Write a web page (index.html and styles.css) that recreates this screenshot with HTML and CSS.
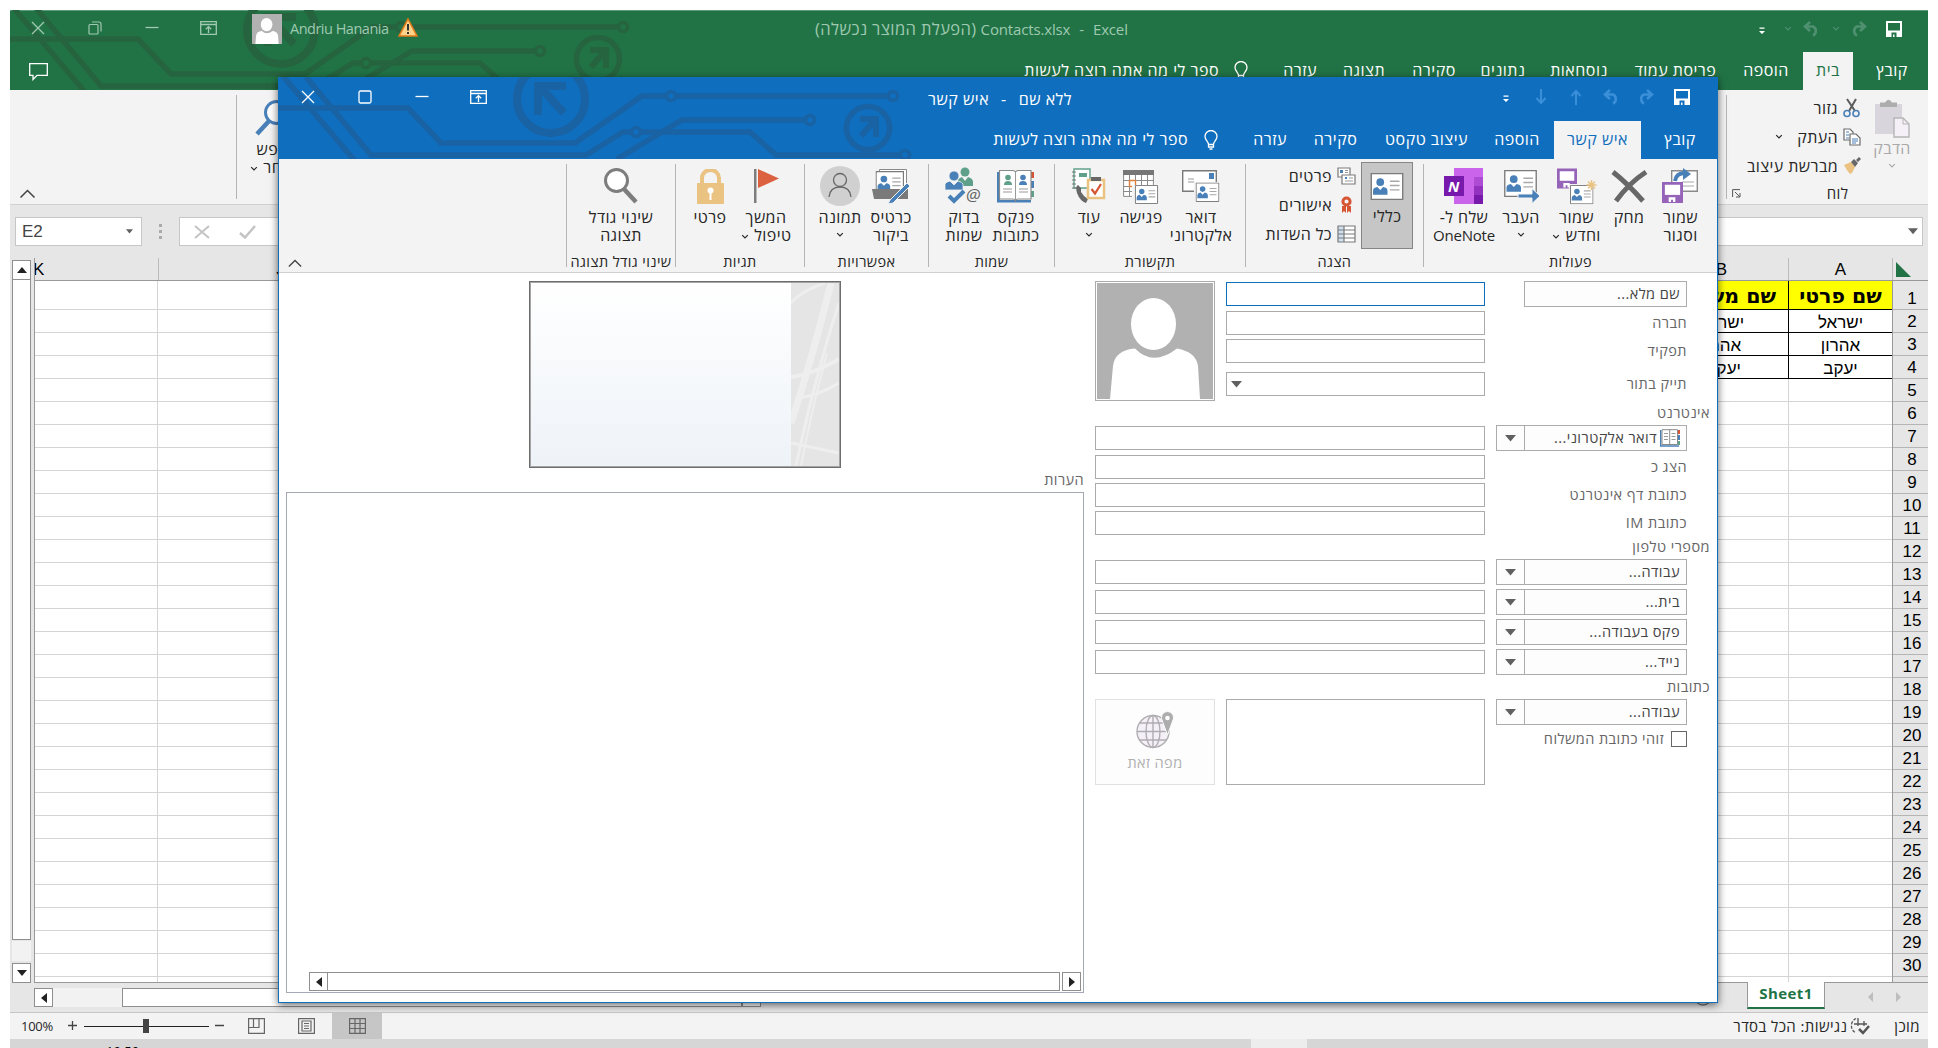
FILE: index.html
```html
<!DOCTYPE html>
<html lang="he">
<head>
<meta charset="utf-8">
<title>Contacts.xlsx - Excel</title>
<link rel="stylesheet" href="styles.css">
</head>
<body>
<svg class="defs" width="0" height="0">
  <symbol id="circuit" viewBox="0 0 640 82">
    <g fill="none" stroke="currentColor" stroke-width="5.5">
      <path d="M0 31H130L163 66H297L364 19H388M397 19H610"/>
      <path d="M4 -2L77 84"/>
      <path d="M28 0L93 78H308L345 55H353M362 55H472L498 78H623"/>
      <path d="M339 82L404 43H528"/>
      <g stroke-width="3.5"><circle cx="393" cy="19" r="4.5"/><circle cx="615" cy="19" r="4.5"/><circle cx="358" cy="55" r="4.5"/><circle cx="532" cy="43" r="4.5"/><circle cx="627" cy="78" r="4.5"/></g>
      <circle cx="273" cy="22" r="34" stroke-width="8"/>
      <circle cx="590" cy="51" r="21.5" stroke-width="5.5"/>
      <path d="M260 38V9H288M262 10L286 36" stroke-width="8"/>
      <path d="M582 42H598V60M597 43L583 59" stroke-width="6"/>
    </g>
  </symbol>
  <symbol id="chev" viewBox="0 0 8 6"><path d="M1.2 1.2L4 4L6.8 1.2" fill="none" stroke="currentColor" stroke-width="1.2"/></symbol>
  <symbol id="save" viewBox="0 0 16 16"><path d="M1 1H15V15H1Z" fill="none" stroke="currentColor" stroke-width="2"/><path d="M1 9.5H15V15H1Z" fill="currentColor"/><path d="M5.5 11.5H10.5V16H8.5V13.5H7V16H5.5Z" fill="var(--bar)"/></symbol>
  <symbol id="redo" viewBox="0 0 18 16"><path d="M11 1L16 5.500L11 10M15 5.500H8A5 5 0 0 0 8 14.500" fill="none" stroke="currentColor" stroke-width="2.600"/></symbol>
  <symbol id="undo" viewBox="0 0 18 16"><path d="M7 1L2 5.500L7 10M3 5.500H10A5 5 0 0 1 10 14.500" fill="none" stroke="currentColor" stroke-width="2.600"/></symbol>
  <symbol id="more" viewBox="0 0 6 8"><path d="M0.500 0.500H5.500V1.700H0.500ZM0 4H6L3 7Z" fill="currentColor"/></symbol>
  <symbol id="close" viewBox="0 0 14 14"><path d="M1 1L13 13M13 1L1 13" fill="none" stroke="currentColor" stroke-width="1.300"/></symbol>
  <symbol id="min" viewBox="0 0 14 14"><path d="M0.500 6.500H13.500" stroke="currentColor" stroke-width="1.300"/></symbol>
  <symbol id="ribbonopt" viewBox="0 0 17 14"><path d="M.7 .7H16.300V13.300H.7ZM.7 3.500H16.300M8.500 12V6M5.800 8.300L8.500 5.600L11.200 8.300" fill="none" stroke="currentColor" stroke-width="1.300"/></symbol>
  <symbol id="bulb" viewBox="0 0 14 20"><path d="M4.500 14.500C4.500 11.500 1 10 1 6.500A6 6 0 0 1 13 6.500C13 10 9.500 11.500 9.500 14.500ZM4.500 14V17H9.500V14M5.500 19H8.500" fill="none" stroke="currentColor" stroke-width="1.300"/></symbol>
  <symbol id="lens" viewBox="0 0 34 36"><circle cx="12.500" cy="12.500" r="11" fill="#fff" stroke="currentColor" stroke-width="3"/><path d="M20 21L32 34" stroke="currentColor" stroke-width="4.500"/></symbol>
  <symbol id="card" viewBox="0 0 34 28"><path d="M.7.7H33.300V27.300H.7Z" fill="#fff" stroke="#7a7a7a" stroke-width="1.400"/><circle cx="10" cy="9.500" r="4" fill="#4a80b8"/><path d="M2.500 22.500V18Q3 15 7 14.500L10 17.500L13 14.500Q17 15 17.500 18V22.500Z" fill="#4a80b8"/><path d="M20 8.500H30M20 13H30M20 17.500H30" stroke="#a8a8a8" stroke-width="1.500"/></symbol>
  <symbol id="floppy" viewBox="0 0 22 22"><path d="M1.500 1.500H20.500V20.500H1.500Z" fill="#fff" stroke="#9563b8" stroke-width="3"/><path d="M1.500 13.500H20.500V21H1.500Z" fill="#9563b8"/><path d="M7 16H14V21H11.500V18.500H9.500V21H7Z" fill="#fff"/></symbol>
  <symbol id="caret" viewBox="0 0 16 10"><path d="M1 8.500L8 1.500L15 8.500" fill="none" stroke="#444" stroke-width="1.500"/></symbol>
  <symbol id="down" viewBox="0 0 11 7"><path d="M0 0H11L5.500 6.500Z" fill="#606060"/></symbol>
  <symbol id="person" viewBox="0 0 116 116"><path fill="#b1b1b1" d="M0 0H116V116H0Z"/><ellipse cx="56.500" cy="41" rx="22.500" ry="26" fill="#fff"/><path d="M13 116L16 83Q18 67 38 65.500Q56 84 80 65.500Q99 69 101 83L103 116Z" fill="#fff"/></symbol>
</svg>

<main class="excel">
  <header class="xl-head">
    <svg class="pattern"><use href="#circuit"/></svg>
    <div class="titlebar">
      <div class="wincontrols">
        <svg width="14" height="14"><use href="#close"/></svg>
        <svg width="14" height="14" viewBox="0 0 14 14"><path d="M1 4.500Q1 3.500 2 3.500H9Q10 3.500 10 4.500V12Q10 13 9 13H2Q1 13 1 12ZM4 1H11Q13 1 13 3V10.500" fill="none" stroke="currentColor" stroke-width="1.200"/></svg>
        <svg width="14" height="14"><use href="#min"/></svg>
        <svg width="17" height="14"><use href="#ribbonopt"/></svg>
      </div>
      <svg class="avatar" preserveAspectRatio="none" viewBox="0 0 116 116"><use href="#person"/></svg>
      <span class="user">Andriu Hanania</span>
      <svg class="warn" viewBox="0 0 20 19"><path d="M10 1L19 18H1Z" fill="#fbd38a" stroke="#e07a1c" stroke-width="1.600"/><path d="M10 6V12.500M10 14V16" stroke="#333" stroke-width="2"/></svg>
      <div class="xl-title"><span class="he" dir="rtl">(הפעלת המוצר נכשלה)</span><span>Contacts.xlsx</span><span class="dash">-</span><span>Excel</span></div>
      <div class="qat xl-qat">
        <svg class="q-save" width="16" height="16"><use href="#save"/></svg>
        <svg class="q-redo dim" width="18" height="16"><use href="#redo"/></svg>
        <svg class="q-c1 dim" width="8" height="6"><use href="#chev"/></svg>
        <svg class="q-undo dim" width="18" height="16"><use href="#undo"/></svg>
        <svg class="q-c2 dim" width="8" height="6"><use href="#chev"/></svg>
        <svg class="q-more" width="6" height="8"><use href="#more"/></svg>
      </div>
    </div>
    <nav class="tabs xl-tabs">
      <span class="w72">קובץ</span><span class="w50 on">בית</span><span class="w74">הוספה</span><span class="w107">פריסת עמוד</span><span class="w86">נוסחאות</span><span class="w66">נתונים</span><span class="w72">סקירה</span><span class="w68">תצוגה</span><span class="w60">עזרה</span>
      <svg class="bulb" width="14" height="20"><use href="#bulb"/></svg><span class="tell">ספר לי מה אתה רוצה לעשות</span>
      <svg class="comment" width="19" height="18" viewBox="0 0 19 18"><path d="M.7.7H18.300V12.300H8L4 16.500V12.300H.7Z" fill="none" stroke="#fff" stroke-width="1.300"/></svg>
    </nav>
  </header>

  <section class="xl-ribbon">
    <div class="clip">
      <div class="paste"><svg width="36" height="39" viewBox="0 0 36 39"><path d="M1 5H28V35H1Z" fill="#d9d5dc"/><path d="M6 8V3.500H11Q14.500 -2 18 3.500H23V8Z" fill="#adadad"/><path d="M20 19H29L35 25V38H20Z" fill="#f5f0f7" stroke="#b5b5b5" stroke-width="1.400"/><path d="M29 19V25H35" fill="none" stroke="#b5b5b5"/></svg><span>הדבק</span><svg width="8" height="6"><use href="#chev"/></svg></div>
      <div class="cliplist">
        <div><svg width="18" height="20" viewBox="0 0 18 20"><path d="M4 1L12 13M13 1L6 13" stroke="#5c5c5c" stroke-width="2"/><g fill="none" stroke="#4a80b8" stroke-width="1.600"><circle cx="4" cy="15.500" r="3"/><circle cx="13" cy="15.500" r="3"/></g></svg><span>גזור</span></div>
        <div><svg width="18" height="18" viewBox="0 0 18 18"><g fill="#fff" stroke="#6c6c6c" stroke-width="1.200"><path d="M1 1H7L10 4V12H1Z"/><path d="M7 6H13L17 10V17H7Z"/></g><path d="M3 4H6M3 7H6M3 10H6M9 11H15M9 13H15M9 15H13" stroke="#4a80b8"/></svg><span>העתק</span><svg class="cc" width="8" height="6"><use href="#chev"/></svg></div>
        <div><svg width="18" height="18" viewBox="0 0 18 18"><path d="M1 8L8 5L12 10L9 16L7 17Q4 14 1 8Z" fill="#eac282"/><path d="M8 5L11 2L15 6L12 10ZM13 3L16 0L18 2L15 5Z" fill="#686868"/></svg><span>מברשת עיצוב</span></div>
      </div>
      <div class="cliplabel">לוח</div>
      <svg class="launch" width="9" height="9" viewBox="0 0 9 9"><path d="M.6 8V.6H8M3 3L7.500 7.500M8 4V8H4" fill="none" stroke="#555"/></svg>
    </div>
    <div class="find"><svg width="34" height="36" class="flip"><use href="#lens"/></svg><span>חפש</span><span>ובחר <svg width="8" height="6"><use href="#chev"/></svg></span></div>
    <svg class="xl-collapse" width="17" height="10"><use href="#caret"/></svg>
  </section>

  <section class="formula">
    <div class="namebox"><span>E2</span><svg width="7" height="5"><use href="#down"/></svg></div>
    <div class="dots"><i></i><i></i><i></i></div>
    <div class="fx"><svg width="16" height="14" viewBox="0 0 16 14"><path d="M1 1L15 13M15 1L1 13" stroke="#c4c4c4" stroke-width="2"/></svg><svg width="17" height="14" viewBox="0 0 17 14"><path d="M1 8L6 12.500L16 1" fill="none" stroke="#c4c4c4" stroke-width="2.500"/></svg><svg class="expand" width="10" height="7"><use href="#down"/></svg></div>
  </section>

  <section class="sheet">
    <div class="vscroll"><div class="sb"><svg width="10" height="6" viewBox="0 0 10 6"><path d="M0 6H10L5 0Z" fill="#222"/></svg></div><div class="vthumb"></div><div class="sb end"><svg width="10" height="6" viewBox="0 0 10 6"><path d="M0 0H10L5 6Z" fill="#222"/></svg></div></div>
    <div class="gridpane">
      <div class="colheads"><span class="corner"><svg width="15" height="15" viewBox="0 0 15 15"><path d="M0 0V15H15Z" fill="#217346"/></svg></span><span class="ca">A</span><span class="cb">B</span><span class="cmid"></span><span class="cj">J</span><span class="ck">K</span></div>
      <div class="gridbody">
        <div class="rownums"><b>1</b><b>2</b><b>3</b><b>4</b><b>5</b><b>6</b><b>7</b><b>8</b><b>9</b><b>10</b><b>11</b><b>12</b><b>13</b><b>14</b><b>15</b><b>16</b><b>17</b><b>18</b><b>19</b><b>20</b><b>21</b><b>22</b><b>23</b><b>24</b><b>25</b><b>26</b><b>27</b><b>28</b><b>29</b><b>30</b><b>31</b></div>
        <div class="cells">
          <div class="cell h">שם פרטי</div><div class="cell h">שם משפחה</div>
          <div class="cell">ישראל</div><div class="cell">ישראל</div>
          <div class="cell">אהרון</div><div class="cell">אהרון</div>
          <div class="cell">יעקב</div><div class="cell">יעקבי</div>
        </div>
      </div>
    </div>
  </section>

  <section class="sheetbar">
    <div class="sb"><svg width="6" height="10" viewBox="0 0 6 10"><path d="M6 0V10L0 5Z" fill="#222"/></svg></div>
    <div class="hgap"></div><div class="hthumb"></div><div class="sb last"></div>
    <svg class="plus" width="20" height="20" viewBox="0 0 20 20"><circle cx="10" cy="10" r="9" fill="none" stroke="#777" stroke-width="1.300"/></svg>
    <div class="tab1">Sheet1</div>
    <svg class="nav" width="34" height="10" viewBox="0 0 34 10"><path d="M5 0V10L0 5ZM28 0V10L33 5Z" fill="#bdbdbd"/></svg>
  </section>

  <footer class="status">
    <span class="pct">100%</span>
    <svg class="slider" width="160" height="26" viewBox="0 0 160 26"><path d="M0 12.500H9M4.500 8V17M147 12.500H156" stroke="#444" stroke-width="1.300"/><path d="M16 13.500H141" stroke="#222"/><path d="M75 6H81V20H75Z" fill="#444"/></svg>
    <svg class="view v1" width="17" height="16" viewBox="0 0 17 16"><path d="M.6.6H16.400V15.400H.6ZM.6 9.500H11V.6M5.500 .6V9.500" fill="none" stroke="#666" stroke-width="1.200"/></svg>
    <svg class="view v2" width="17" height="16" viewBox="0 0 17 16"><path d="M.6.6H16.400V15.400H.6ZM4 3H13V13H4ZM6 5.500H11M6 8H11M6 10.500H11" fill="none" stroke="#666" stroke-width="1.200"/></svg>
    <span class="viewon"><svg width="17" height="16" viewBox="0 0 17 16"><path d="M.6.6H16.400V15.400H.6ZM6 .6V15.400M11 .6V15.400M.6 5.500H16.400M.6 10.500H16.400" fill="none" stroke="#666" stroke-width="1.200"/></svg></span>
    <span class="access">נגישות: הכל בסדר</span>
    <svg class="acc" width="20" height="18" viewBox="0 0 20 18"><path d="M6 1.500A8 8 0 0 0 6 16" fill="none" stroke="#555" stroke-width="1.300" stroke-dasharray="3 1.500"/><path d="M8 1V9M4 7H12M14 4V9M11 7H17" stroke="#555" stroke-width="1.300"/><path d="M9 12L13 16L19 9" fill="none" stroke="#555" stroke-width="2.500"/></svg>
    <span class="ready">מוכן</span>
  </footer>
</main>
<div class="taskbar"><span class="clock">10:59</span><span class="running"></span></div>

<section class="outlook">
  <header class="ol-head">
    <svg class="pattern"><use href="#circuit"/></svg>
    <div class="titlebar">
      <div class="wincontrols">
        <svg width="14" height="14"><use href="#close"/></svg>
        <svg width="14" height="14" viewBox="0 0 14 14"><rect x="1" y="1" width="12" height="12" rx="1.500" fill="none" stroke="currentColor" stroke-width="1.300"/></svg>
        <svg width="14" height="14"><use href="#min"/></svg>
        <svg width="17" height="14"><use href="#ribbonopt"/></svg>
      </div>
      <div class="ol-title" dir="rtl">ללא שם<span>-</span>איש קשר</div>
      <div class="qat ol-qat">
        <svg class="q-save" width="16" height="16"><use href="#save"/></svg>
        <svg class="o-redo dim" width="18" height="16"><use href="#redo"/></svg>
        <svg class="o-undo dim" width="18" height="16"><use href="#undo"/></svg>
        <svg class="o-arr dim" width="12" height="16" viewBox="0 0 12 16"><path d="M6 16V2M1.500 7L6 2L10.500 7" fill="none" stroke="currentColor" stroke-width="2"/></svg>
        <svg class="o-arr dim" width="12" height="16" viewBox="0 0 12 16"><path d="M6 0V14M1.500 9L6 14L10.500 9" fill="none" stroke="currentColor" stroke-width="2"/></svg>
        <svg class="o-more" width="6" height="8"><use href="#more"/></svg>
      </div>
    </div>
    <nav class="tabs ol-tabs">
      <span class="w74">קובץ</span><span class="w87 on">איש קשר</span><span class="w74">הוספה</span><span class="w107">עיצוב טקסט</span><span class="w75">סקירה</span><span class="w56">עזרה</span>
      <svg class="bulb" width="14" height="20"><use href="#bulb"/></svg><span class="tell">ספר לי מה אתה רוצה לעשות</span>
    </nav>
  </header>

  <section class="ol-ribbon">
    <div class="group g-actions">
      <div class="btns">
        <div class="btn"><i><svg width="37" height="36" viewBox="0 0 37 36"><path d="M9.700 2.700H35.300V23.300H9.700Z" fill="#fff" stroke="#8a8a8a" stroke-width="1.400"/><path d="M20 14H32M20 18H32" stroke="#a8a8a8"/><path d="M13 13Q14 5 23 5" fill="none" stroke="#4a80b8" stroke-width="4"/><path d="M21 0L29 6L21 12Z" fill="#4a80b8"/><use href="#floppy" x="0" y="14" width="21" height="21"/></svg></i><span>שמור</span><span>וסגור</span></div>
        <div class="btn"><i><svg width="37" height="34" viewBox="0 0 37 34"><path d="M2 3Q16 14 32 32M35 3Q18 14 5 32" fill="none" stroke="#676767" stroke-width="5"/></svg></i><span>מחק</span></div>
        <div class="btn"><i><svg width="40" height="38" viewBox="0 0 40 38"><use href="#floppy" x="0" y="1" width="20" height="21"/><path d="M12 17H37V37H12Z" fill="#f3f3f3"/><use href="#card" x="13" y="18" width="23.500" height="19.300"/><path d="M34.500 13V23M29.500 18H39.500M31 14.500L38 21.500M38 14.500L31 21.500" stroke="#eac282" stroke-width="1.500"/></svg></i><span>שמור</span><span>וחדש <svg width="8" height="6"><use href="#chev"/></svg></span></div>
        <div class="btn"><i><svg width="38" height="36" viewBox="0 0 38 36"><use href="#card" x="1" y="2" width="35" height="27"/><path d="M16 26H30V20.500L38 28L30 35.500V30H16Z" fill="#4a80b8" stroke="#f3f3f3"/></svg></i><span>העבר</span><svg width="8" height="6"><use href="#chev"/></svg></div>
        <div class="btn"><i><svg width="40" height="38" viewBox="0 0 40 38"><path d="M10 1H39V37H10Z" fill="#ca64ea"/><path d="M30 10H39V19H30Z" fill="#ae4bd5"/><path d="M30 19H39V28H30Z" fill="#9332bf"/><path d="M30 28H39V37H30Z" fill="#7719aa"/><rect y="9" width="20" height="20" fill="#7719aa"/><text x="4" y="24.500" fill="#fff" font-family="Open Sans" font-weight="700" font-size="15">N</text></svg></i><span>שלח ל-</span><span class="latin">OneNote</span></div>
      </div><div class="glabel">פעולות</div>
    </div>
    <div class="group g-show">
      <div class="btns">
        <div class="btn sel"><i><svg width="34" height="27"><use href="#card"/></svg></i><span>כללי</span></div>
        <div class="showlist">
          <div><svg width="19" height="18" viewBox="0 0 19 18"><g fill="#fff" stroke="#7a7a7a" stroke-width="1.200"><path d="M1 1H13V10H1Z"/><path d="M5 8H18V17H5Z"/></g><path d="M3 3H6V6H3ZM8 10H10V12H8Z" fill="#4a80b8"/><path d="M8 3.500H11M8 5.500H11M12 11H16M8 14H16" stroke="#999"/></svg><span>פרטים</span></div>
          <div><svg width="19" height="18" viewBox="0 0 19 18"><circle cx="9.500" cy="5.500" r="3.600" fill="none" stroke="#d65532" stroke-width="3"/><path d="M5 10H9L9 17L7 15L5 17ZM10 10H14V17L12 15L10 17Z" fill="#d65532"/></svg><span>אישורים</span></div>
          <div><svg width="19" height="18" viewBox="0 0 19 18"><path d="M1 1H18V17H1Z" fill="#fff"/><path d="M1 1H7V17H1Z" fill="#cfe0f0"/><path d="M1 1H18V17H1ZM7 1V17M1 5H18M1 9H18M1 13H18" fill="none" stroke="#7a7a7a" stroke-width="1.200"/></svg><span>כל השדות</span></div>
        </div>
      </div><div class="glabel">הצגה</div>
    </div>
    <div class="group g-comm">
      <div class="btns">
        <div class="btn"><i><svg width="38" height="32" viewBox="0 0 38 32"><path d="M.7.7H34.300V21.300H.7Z" fill="#fff" stroke="#7a7a7a" stroke-width="1.400"/><path d="M27 3H32V9H27Z" fill="#4a80b8"/><path d="M6 9H12M6 12H12" stroke="#999"/><path d="M12 12H38V32H12Z" fill="#f3f3f3"/><use href="#card" x="13.500" y="12.500" width="24" height="19.500"/></svg></i><span>דואר</span><span>אלקטרוני</span></div>
        <div class="btn"><i><svg width="36" height="36" viewBox="0 0 36 36"><path d="M.6 2.600H30.400V28.400H.6Z" fill="#fff" stroke="#8a8a8a"/><path d="M0 2H31V7H0Z" fill="#767676"/><path d="M6.500 7V28M12.500 7V28M18.500 7V28M24.500 7V28M0 12.500H31M0 18.500H31M0 23.500H31" stroke="#8a8a8a"/><path d="M6.500 12.500H12.500V18.500H6.500Z" fill="none" stroke="#e0803a" stroke-width="1.400"/><path d="M9 17H36V36H9Z" fill="#f3f3f3"/><use href="#card" x="11" y="17" width="25" height="19"/></svg></i><span>פגישה</span></div>
        <div class="btn"><i><svg width="34" height="36" viewBox="0 0 34 36"><path d="M2 1H18V20H2Z" fill="#fff" stroke="#5fa08a" stroke-width="1.400"/><path d="M7 5H15V9H7Z" fill="#5fa08a"/><path d="M0 4H4M0 8H4M0 12H4M0 16H4M0 20H4" stroke="#777"/><path d="M6 17Q3 18 5 25Q8 33 14 35L16 31L12 28L9 24V20Z" fill="#676767"/><rect x="16" y="12" width="16" height="18" fill="#fff" stroke="#eac282" stroke-width="2.500"/><path d="M19 9H29V13H19Z" fill="#676767"/><path d="M19.500 21L23 25.500L29 16" fill="none" stroke="#d65532" stroke-width="2.200"/></svg></i><span>עוד</span><svg width="8" height="6"><use href="#chev"/></svg></div>
      </div><div class="glabel">תקשורת</div>
    </div>
    <div class="group g-names">
      <div class="btns">
        <div class="btn"><i><svg width="38" height="34" viewBox="0 0 38 34"><path d="M34 3H37V9H34Z" fill="#d65532"/><path d="M34 12H37V19H34Z" fill="#4a80b8"/><path d="M34 22H37V28H34Z" fill="#5fa08a"/><path d="M0 3H3V31H34V33.500H0Z" fill="#4a80b8"/><path d="M2.500 1.500H16Q18 2 18.500 3Q19 2 21 1.500H34V30H21Q19 30 18.500 31.500Q18 30 16 30H2.500Z" fill="#fff" stroke="#8a8a8a" stroke-width="1.200"/><path d="M18.500 3V31M6 20H15M6 23H15M22 20H31M22 23H31" stroke="#999"/><circle cx="11" cy="8.500" r="2.800" fill="#5fa08a"/><path d="M7 16Q7 12 11 12Q15 12 15 16Z" fill="#5fa08a"/><circle cx="26" cy="8.500" r="2.800" fill="#4a80b8"/><path d="M22 16Q22 12 26 12Q30 12 30 16Z" fill="#4a80b8"/></svg></i><span>פנקס</span><span>כתובות</span></div>
        <div class="btn"><i><svg width="38" height="38" viewBox="0 0 38 38"><g fill="#5fa08a"><circle cx="20" cy="5" r="4.500"/><path d="M13 19V13Q14 11 17 10L20 14L23 10Q27 11 28 14V19Z"/></g><g fill="#4a80b8" stroke="#f3f3f3" stroke-width=".8"><circle cx="9" cy="9" r="5"/><path d="M0 23V17Q1 15 5 14L9 18L13 14Q17 15 18 17V23Z"/></g><path d="M4 29L9 34L19 24" fill="none" stroke="#4a80b8" stroke-width="4"/><text x="21" y="34" font-family="Open Sans" font-size="17" fill="#666">@</text></svg></i><span>בדוק</span><span>שמות</span></div>
      </div><div class="glabel">שמות</div>
    </div>
    <div class="group g-options">
      <div class="btns">
        <div class="btn"><i><svg width="38" height="36" viewBox="0 0 38 36"><path d="M7.500 1.500H34.500V20H7.500Z" fill="#fff" stroke="#8a8a8a"/><use href="#card" x="3.500" y="3" width="28.500" height="23.500"/><path d="M0 21H36V31H2Z" fill="#7a7a7a"/><path d="M35 15L18 32L16 36L21 35L38 18Z" fill="#4a80b8" stroke="#f3f3f3"/></svg></i><span>כרטיס</span><span>ביקור</span></div>
        <div class="btn"><i><svg width="40" height="40" viewBox="0 0 40 40"><circle cx="20" cy="20" r="20" fill="#d0d0d0"/><circle cx="20" cy="14" r="6.500" fill="none" stroke="#666" stroke-width="1.300"/><path d="M9 31Q10 21 20 21Q30 21 31 31" fill="none" stroke="#666" stroke-width="1.300"/></svg></i><span>תמונה</span><svg width="8" height="6"><use href="#chev"/></svg></div>
      </div><div class="glabel">אפשרויות</div>
    </div>
    <div class="group g-tags">
      <div class="btns">
        <div class="btn"><i><svg width="25" height="34" viewBox="0 0 25 34"><path d="M0 0H2.500V34H0Z" fill="#7d7d7d"/><path d="M4 0L25 9.500L4 19Z" fill="#dc6141"/></svg></i><span>המשך</span><span>טיפול <svg width="8" height="6"><use href="#chev"/></svg></span></div>
        <div class="btn"><i><svg width="27" height="35" viewBox="0 0 27 35"><path d="M5 16V9A8.500 8 0 0 1 22 9V16" fill="none" stroke="#eac282" stroke-width="4"/><rect y="14" width="27" height="21" rx="1" fill="#eac282"/><circle cx="13.500" cy="21.500" r="3" fill="#fff"/><path d="M12.500 23H14.500V31H12.500Z" fill="#fff"/></svg></i><span>פרטי</span></div>
      </div><div class="glabel">תגיות</div>
    </div>
    <div class="group g-zoom">
      <div class="btns">
        <div class="btn"><i><svg class="grey" width="34" height="36"><use href="#lens"/></svg></i><span>שינוי גודל</span><span>תצוגה</span></div>
      </div><div class="glabel">שינוי גודל תצוגה</div>
    </div>
    <svg class="ol-collapse" width="14" height="9"><use href="#caret"/></svg>
  </section>

  <div class="contact">
    <form class="fields">
      <div class="photo"><svg viewBox="0 0 116 116"><use href="#person"/></svg></div>
      <div class="lbtn r1">שם מלא...</div><div class="inp r1 focus"></div>
      <div class="lab r2">חברה</div><div class="inp r2"></div>
      <div class="lab r3">תפקיד</div><div class="inp r3"></div>
      <div class="lab r4">תייק בתור</div><div class="inp r4 combo"><svg width="11" height="7"><use href="#down"/></svg></div>
      <div class="sec r5">אינטרנט</div>
      <div class="lbtn r6"><svg width="20" height="18" viewBox="0 0 20 18"><path d="M18 1H20V5H18Z" fill="#d65532"/><path d="M18 6H20V11H18Z" fill="#4a80b8"/><path d="M18 12H20V16H18Z" fill="#5fa08a"/><path d="M.7 1V17H19" fill="none" stroke="#4a80b8" stroke-width="1.400"/><path d="M2 .7H17.500V15.500H2ZM9.700 .7V16" fill="#fff" stroke="#8a8a8a"/><path d="M4 4.500H8M4 7.500H8M4 10.500H8M11.500 4.500H15.500M11.500 7.500H15.500M11.500 10.500H15.500" stroke="#999"/></svg>דואר אלקטרוני...</div><div class="arr r6"><svg width="11" height="7"><use href="#down"/></svg></div><div class="inp wide r6"></div>
      <div class="lab r7">הצג כ</div><div class="inp wide r7"></div>
      <div class="lab r8">כתובת דף אינטרנט</div><div class="inp wide r8"></div>
      <div class="lab r9">כתובת IM</div><div class="inp wide r9"></div>
      <div class="sec r10">מספרי טלפון</div>
      <div class="lbtn r11">עבודה...</div><div class="arr r11"><svg width="11" height="7"><use href="#down"/></svg></div><div class="inp wide r11"></div>
      <div class="lbtn r12">בית...</div><div class="arr r12"><svg width="11" height="7"><use href="#down"/></svg></div><div class="inp wide r12"></div>
      <div class="lbtn r13">פקס בעבודה...</div><div class="arr r13"><svg width="11" height="7"><use href="#down"/></svg></div><div class="inp wide r13"></div>
      <div class="lbtn r14">נייד...</div><div class="arr r14"><svg width="11" height="7"><use href="#down"/></svg></div><div class="inp wide r14"></div>
      <div class="sec r15">כתובות</div>
      <div class="lbtn r16">עבודה...</div><div class="arr r16"><svg width="11" height="7"><use href="#down"/></svg></div><div class="address"></div>
      <div class="check r17"><i></i><span>זוהי כתובת המשלוח</span></div>
      <div class="map"><svg width="38" height="38" viewBox="0 0 38 38"><g fill="none" stroke="#b0adb2" stroke-width="1.400"><circle cx="17" cy="20.500" r="16" fill="#f5f0f7"/><ellipse cx="17" cy="20.500" rx="7" ry="16"/><path d="M17 4.500V36.500M1 20.500H33M4 12H30M4 29H30"/></g><path d="M31.500 24L26 9A6 6 0 1 1 37 9Z" fill="#adadad" stroke="#fdfdfd"/><circle cx="31.500" cy="7" r="2.300" fill="#fff"/></svg><span>מפה זאת</span></div>
    </form>
    <div class="side">
      <div class="bizcard"><div class="grad"></div><svg width="48" height="183" viewBox="0 0 48 183"><path fill="#e5e5e5" d="M0 0H48V183H0Z"/><g fill="none" stroke="#eee"><path d="M40 0Q20 80 0 140" stroke-width="7"/><path d="M48 20Q25 90 5 183" stroke-width="3"/><path d="M0 94Q20 92 48 76" stroke-width="4"/><path d="M8 115Q28 112 48 100M0 160L48 170M0 20Q10 8 34 0" stroke-width="3"/><path d="M36 70Q20 130 10 183" stroke-width="2"/></g></svg></div>
      <div class="noteslabel">הערות</div>
      <div class="notes"><div class="nscroll"><div class="sb"><svg width="6" height="10" viewBox="0 0 6 10"><path d="M6 0V10L0 5Z" fill="#222"/></svg></div><div class="ntrack"></div><div class="sb"><svg width="6" height="10" viewBox="0 0 6 10"><path d="M0 0V10L6 5Z" fill="#222"/></svg></div></div></div>
    </div>
  </div>
</section>
</body>
</html>
```
FILE: styles.css
```css
* { box-sizing: border-box; }
html, body { margin: 0; height: 100%; overflow: hidden; background: #fff; }
body { position: relative; padding: 10px 10px 0; font-family: "Open Sans", "Liberation Sans", sans-serif; font-size: 16px; line-height: 18px; letter-spacing: .4px; color: #262626; }
svg { display: block; flex: none; direction: ltr; letter-spacing: 0; }
.defs { position: absolute; }
span { white-space: nowrap; }

.excel { width: 1918px; height: 1029px; display: flex; flex-direction: column; background: #e6e6e6; overflow: hidden; }
.xl-head { --bar: #217346; position: relative; height: 80px; flex: none; background: #217346; border-top: 1px solid #5c9a77; color: #fff; }
.pattern { position: absolute; left: 0; top: 0; width: 640px; height: 82px; color: #26643f; }
.xl-head .pattern { top: -3px; height: 82px; left: -2px; clip-path: inset(0 0 0 2px); }
.titlebar { position: relative; display: flex; align-items: center; }
.xl-head .titlebar { height: 35px; color: #9fc9b0; font-size: 15px; }
.wincontrols { display: grid; grid-template-columns: repeat(4, 57px); justify-items: center; align-items: center; }
.xl-head .wincontrols { margin: -2px 1px 0 -1px; }
.avatar { width: 30px; height: 30px; margin-left: 14px; }
.user { margin-left: 8px; width: 108px; letter-spacing: -.5px; font-size: 14.5px; }
.warn { width: 20px; height: 19px; margin-top: -2px; }
.xl-title { margin-left: 397px; width: 330px; display: flex; gap: 4px; letter-spacing: -.15px; }
.xl-title .he { font-size: 16.5px; letter-spacing: .4px; }
.dash { margin: 0 5px; }
.qat { display: flex; direction: rtl; align-items: center; margin-left: auto; color: #fff; }
.xl-qat { padding-right: 26px; }
.ol-qat { padding-right: 27px; }
.dim { color: #4f9070; }
.q-redo { margin-right: 19px; }
.q-c1 { margin-right: 9px; }
.q-undo { margin-right: 11px; }
.q-c2 { margin-right: 11px; }
.q-more { margin: 4px 19px 0 0; }
.tabs { position: relative; display: flex; direction: rtl; align-items: stretch; height: 38px; line-height: 37px; font-size: 16px; letter-spacing: .5px; }
.xl-tabs { margin-top: 6px; }
.tabs span { text-align: center; }
.tabs .on { background: #f3f3f3; color: #217346; }
.xl-tabs .on { margin-right: 3px; }
.ol-tabs .on { color: #106ebe; margin-right: 2px; }
.w50 { width: 50px; } .w56 { width: 56px; } .w60 { width: 60px; } .w66 { width: 66px; } .w68 { width: 68px; }
.w72 { width: 72px; } .w74 { width: 74px; } .w75 { width: 75px; } .w86 { width: 86px; } .w87 { width: 87px; } .w107 { width: 107px; }
.bulb { margin: 9px 22px 0 15px; align-self: flex-start; }
.ol-tabs .bulb { margin: 9px 24px 0 16px; }
.comment { margin: 11px auto 0 19px; }

.xl-ribbon { position: relative; height: 115px; flex: none; background: #f3f3f3; border-bottom: 1px solid #d0d0d0; display: flex; direction: rtl; }
.clip { width: 202px; display: grid; grid-template-columns: 72px 1fr; grid-template-rows: 92px 1fr; border-left: 1px solid #b5b5b5; margin: 5px 0; position: relative; }
.paste { display: flex; flex-direction: column; align-items: center; padding-top: 4px; color: #a9a9a9; }
.paste span { margin: 1px 0 6px; }
.cliplist { display: grid; grid-template-rows: repeat(3, 29px); margin-top: -2px; }
.cliplist div { display: flex; align-items: center; gap: 5px; margin-right: -5px; }
.cliplist .cc { margin-right: 9px; }
.cliplabel { grid-column: 1 / 3; text-align: center; margin-right: -20px; line-height: 12px; font-size: 15px; }
.launch { position: absolute; left: 5px; bottom: 1px; }
.find { margin-right: auto; width: 72px; margin-left: 226px; border-left: 1px solid #b5b5b5; display: flex; flex-direction: column; align-items: center; margin-top: 5px; margin-bottom: 5px; padding-top: 5px; }
.find .flip { transform: scaleX(-1) translateX(1px); color: #4a80b8; margin-bottom: 4px; }
.find span svg, .btn span svg { display: inline-block; vertical-align: 1px; margin-right: 1px; }
.xl-collapse { position: absolute; left: 9px; bottom: 5px; }

.formula { height: 53px; flex: none; display: flex; align-items: flex-start; padding: 12px 5px 0; }
.namebox { width: 127px; height: 29px; border: 1px solid #c6c6c6; background: #fff; display: flex; align-items: center; justify-content: space-between; padding: 0 8px 0 6px; font: 17px "Liberation Sans", sans-serif; color: #444; letter-spacing: 0; }
.dots { width: 37px; height: 29px; display: flex; flex-direction: column; gap: 3px; align-items: center; justify-content: center; }
.dots i { width: 3px; height: 3px; background: #aaa; }
.fx { flex: 1; height: 29px; border: 1px solid #c6c6c6; background: #fff; display: flex; align-items: center; padding: 0 4px 0 14px; gap: 29px; }
.expand { margin-left: auto; }

.sheet { height: 725px; flex: none; display: flex; letter-spacing: 0; }
.vscroll { width: 24px; display: flex; flex-direction: column; padding: 2px 3px 0 2px; }
.sb { width: 19px; height: 20px; border: 1px solid #8f8f8f; background: #fff; display: flex; align-items: center; justify-content: center; flex: none; }
.vthumb { height: 664px; margin-top: -1px; border: 1px solid #8f8f8f; background: #fff; }
.vscroll .end { margin-top: 23px; box-shadow: 0 -22px #f2f2f2; }
.gridpane { flex: 1; display: flex; flex-direction: column; border-left: 1px solid #999; border-bottom: 1px solid #999; overflow: hidden; }
.colheads { height: 23px; flex: none; display: flex; direction: rtl; border-bottom: 1px solid #999; font: 17px/24px "Liberation Sans", sans-serif; color: #000; margin-left: -1px; background: #e6e6e6; }
.colheads span { text-align: center; border-left: 1px solid #bbb; }
.corner { width: 36px; }
.corner svg { margin: 4px 17px 0 0; }
.ca { width: 104px; }
.cb { width: 134px; }
.cmid { flex: 1; }
.colheads .cj { width: 220px; padding-left: 24px; }
.colheads .ck { width: 124px; text-align: left; border: 0; direction: ltr; text-indent: -1px; }
.gridbody { flex: 1; display: flex; direction: rtl; overflow: hidden; }
.rownums { width: 36px; border-left: 1px solid #999; }
.rownums b { display: block; height: 23px; border-bottom: 1px solid #b5b5b5; font: 17px/24px "Liberation Sans", sans-serif; color: #000; text-align: center; padding-left: 3px; overflow: hidden; }
.rownums b:first-child { height: 29px; line-height: 36px; }
.cells { flex: 1; display: grid; grid-template-columns: 104px 134px; grid-template-rows: 29px repeat(3, 23px); align-content: start; background:
  linear-gradient(#d4d4d4, #d4d4d4) 122px 0 / 1px 100% no-repeat,
  linear-gradient(#d4d4d4, #d4d4d4) calc(100% - 103px) 0 / 1px 100% no-repeat,
  repeating-linear-gradient(#fff 0 22px, #d4d4d4 22px 23px) 0 6px; }
.cell { background: #fff; border-left: 1px solid #000; border-bottom: 1px solid #000; text-align: center; font: 17px/25px "Liberation Sans", sans-serif; color: #000; white-space: nowrap; overflow: hidden; }
.cell.h { background: #ff0; font-weight: 700; font-size: 20.5px; line-height: 31px; font-family: "DejaVu Sans", sans-serif; }

.sheetbar { height: 29px; flex: none; display: flex; align-items: flex-start; padding: 4px 0 0 24px; }
.sheetbar > .sb { margin-top: 1px; height: 19px; }
.hgap { width: 69px; height: 19px; margin-top: 1px; background: #f2f2f2; }
.hthumb { width: 620px; height: 19px; margin-top: 1px; border: 1px solid #8f8f8f; background: #fff; }
.plus { margin-left: 932px; margin-top: -1px; }
.tab1 { width: 78px; height: 27px; margin: -5px 0 0 34px; background: #fff; border: 1px solid #999; border-top: 0; border-bottom: 2px solid #217346; color: #217346; font-weight: 700; font-size: 15px; line-height: 23px; text-align: center; }
.nav { margin: 5px 0 0 43px; }

.status { height: 27px; flex: none; border-top: 1px solid #c6c6c6; background: #f3f3f3; display: flex; align-items: center; }
.pct { width: 58px; padding-left: 11px; font-size: 13px; letter-spacing: -.3px; }
.slider { margin-right: 24px; }
.v1 { margin-left: -4px; } .v2 { margin-left: 33px; }
.viewon { margin-left: 17px; width: 50px; height: 26px; background: #c6c6c6; display: grid; place-items: center; }
.access { margin-left: auto; direction: rtl; font-size: 15px; }
.acc { margin: 0 0 0 3px; }
.ready { direction: rtl; margin: 0 8px 0 24px; font-size: 15px; }

.taskbar { height: 9px; width: 1918px; background: #d6d6d6; display: flex; overflow: hidden; font-size: 13px; color: #000; letter-spacing: 0; }
.clock { padding: 3px 0 0 96px; width: 1241px; }
.running { width: 56px; background: #ededed; }

.outlook { position: absolute; left: 278px; top: 77px; width: 1440px; height: 926px; border: 1px solid #106ebe; background: #fff; box-shadow: 0 2px 8px rgba(0,0,0,.6); display: flex; flex-direction: column; }
.ol-head { --bar: #106ebe; position: relative; height: 81px; flex: none; background: #106ebe; color: #fff; }
.ol-head .pattern { color: #1962a3; top: -1px; left: -1px; }
.ol-head .titlebar { height: 38px; }
.ol-title { margin: 3px 0 0 421px; display: flex; gap: 12px; font-size: 16px; letter-spacing: .5px; }
.ol-head .dim { color: #3a8fd8; }
.o-redo { margin-right: 20px; } .o-undo { margin-right: 15px; } .o-arr { margin-right: 21px; } .o-arr + .o-arr { margin-right: 23px; }
.o-more { margin: 4px 26px 0 0; }
.ol-tabs { margin-top: 5px; }

.ol-ribbon { position: relative; height: 114px; flex: none; background: #f3f3f3; border-bottom: 1px solid #d0d0d0; display: flex; direction: rtl; padding: 5px 0; }
.group { height: 103px; border-left: 1px solid #b5b5b5; }
.btns { display: grid; height: 89px; }
.glabel { text-align: center; font-size: 14.5px; line-height: 18px; white-space: nowrap; }
.g-actions { width: 294px; } .g-actions .btns { grid-template-columns: 51px 52px 53px 58px 56px; padding-right: 11px; }
.g-show { width: 178px; } .g-show .btns { grid-template-columns: 52px 1fr; padding-right: 10px; }
.g-comm { width: 191px; } .g-comm .btns { grid-template-columns: 62px 58px 46px; padding-right: 13px; }
.g-names { width: 126px; } .g-names .btns { grid-template-columns: 52px 52px; padding-right: 12px; }
.g-options { width: 124px; } .g-options .btns { grid-template-columns: 52px 50px; padding-right: 11px; }
.g-tags { width: 129px; } .g-tags .btns { grid-template-columns: 56px 56px; padding-right: 10px; }
.g-zoom { width: 109px; } .g-zoom .btns { grid-template-columns: 90px; padding-right: 9px; }
.btn { display: flex; flex-direction: column; align-items: center; font-size: 16px; }
.btn i { height: 44px; display: grid; place-items: center; flex: none; }
.btn > span { line-height: 18px; }
.btn > svg { margin-top: 6px; }
.latin { letter-spacing: -.2px; font-size: 15px; }
.sel { background: #c6c6c6; border: 1px solid #868686; height: 87px; margin-top: -2px; }
.sel i { padding-top: 2px; }
.grey { color: #7d7d7d; }
.showlist { display: grid; grid-template-rows: repeat(3, 29px); padding-right: 5px; margin-top: -3px; }
.showlist div { display: flex; align-items: center; gap: 5px; }
.ol-collapse { position: absolute; left: 9px; bottom: 4px; }

.contact { flex: 1; display: flex; direction: rtl; }
.fields { margin: 0; padding: 7px 7px 0 0; display: grid; grid-template-columns: 23px 163px 28px 11px 259px 11px 120px; grid-template-rows: 28px 30px 26px 40px 18px 32px 26px 30px 26px 22px 28px 32px 28px 32px 18px 32px 22px 35px; align-items: center; width: 633px; font-size: 14.5px; letter-spacing: .45px; color: #666; align-content: start; }
.fields > div { grid-row: var(--r); }
.r1 { --r: 1; } .r2 { --r: 2; } .r3 { --r: 3; } .r4 { --r: 4; } .r5 { --r: 5; } .r6 { --r: 6; } .r7 { --r: 7; } .r8 { --r: 8; } .r9 { --r: 9; }
.r10 { --r: 10; } .r11 { --r: 11; } .r12 { --r: 12; } .r13 { --r: 13; } .r14 { --r: 14; } .r15 { --r: 15; } .r16 { --r: 16; } .r17 { --r: 17; }
.photo { --r: 1 / 5; grid-column: 7; align-self: start; margin-top: 1px; width: 120px; height: 120px; border: 1px solid #ababab; padding: 1px; }
.photo svg { width: 116px; height: 116px; }
.lab { grid-column: 2 / 4; }
.sec { grid-column: 1 / 4; }
.lbtn { grid-column: 2; height: 26px; border: 1px solid #ababab; background: #fdfdfd; color: #444; display: flex; align-items: center; padding-right: 6px; gap: 3px; }
.arr { grid-column: 3; height: 26px; border: 1px solid #ababab; border-right: 0; background: #fdfdfd; display: grid; place-items: center; }
.inp { grid-column: 5; height: 24px; border: 1px solid #ababab; background: #fff; }
.inp.wide { grid-column: 5 / 8; }
.inp.focus { border-color: #106ebe; }
.combo { display: flex; align-items: center; justify-content: flex-end; padding-left: 4px; }
.address { --r: 16 / 19; grid-column: 5; align-self: stretch; margin-top: 3px; border: 1px solid #ababab; }
.map { --r: 16 / 19; grid-column: 7; align-self: stretch; margin-top: 3px; border: 1px solid #e1e1e1; background: #fdfdfd; display: flex; flex-direction: column; align-items: center; padding-top: 11px; color: #b0b0b0; gap: 5px; }
.check { grid-column: 2; display: flex; align-items: center; gap: 7px; }
.check i { width: 16px; height: 16px; border: 1px solid #666; background: #fff; }
.side { flex: 1; display: flex; flex-direction: column; align-items: center; padding: 8px 0 9px 7px; font-size: 14.5px; color: #666; }
.bizcard { width: 312px; height: 187px; border: 1px solid #6d6d6d; outline: 1px solid #a5a5a5; outline-offset: -2px; display: flex; direction: ltr; padding: 1px; flex: none; }
.grad { flex: 1; background: linear-gradient(#fff, #eef3f8); }
.noteslabel { align-self: stretch; height: 24px; line-height: 24px; flex: none; }
.notes { flex: 1; align-self: stretch; border: 1px solid #a5a9b5; display: flex; align-items: flex-end; padding-bottom: 1px; }
.nscroll { display: flex; direction: ltr; width: 772px; margin-right: 2px; }
.nscroll .sb { height: 19px; }
.ntrack { flex: 1; border: 1px solid #8f8f8f; border-left: 0; height: 19px; margin-right: 2px; }
```
